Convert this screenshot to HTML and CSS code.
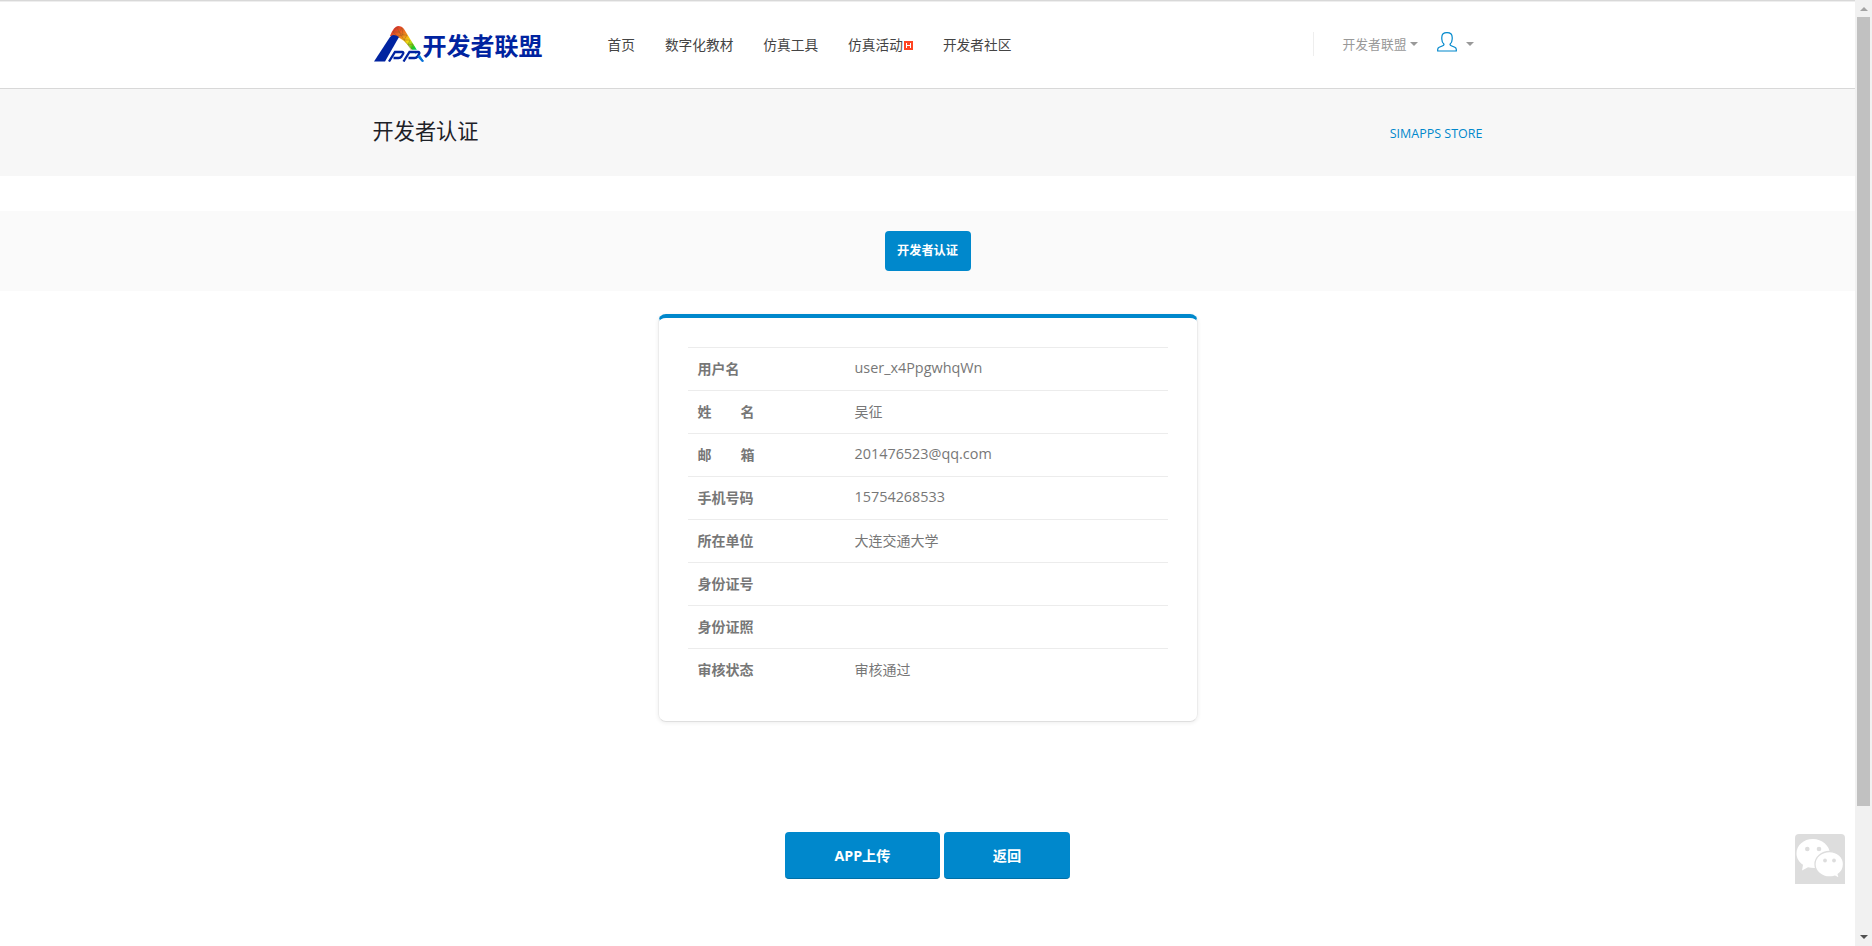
FILE: index.html
```html
<!DOCTYPE html>
<html lang="zh-CN">

<head>
  <meta charset="utf-8">
  <title>开发者认证</title>
  <link rel="stylesheet" href="styles.css">
</head>

<body>

  <div class="page">
    <!-- Header -->
    <header class="header">
      <div class="container header-row">
        <a class="logo">
          <svg width="52" height="38" viewBox="0 0 52 38">
            <defs>
              <linearGradient id="rainbow" x1="20" y1="2" x2="48" y2="37" gradientUnits="userSpaceOnUse">
                <stop offset="0" stop-color="#d8202c"/>
                <stop offset=".28" stop-color="#ee7a20"/>
                <stop offset=".48" stop-color="#f2dc10"/>
                <stop offset=".66" stop-color="#18d020"/>
                <stop offset=".82" stop-color="#08b8d8"/>
                <stop offset="1" stop-color="#0870d8"/>
              </linearGradient>
            </defs>
            <path d="M17 12 Q21 2 25 2 Q29 2 31 5 L51 37.500 H49 L34 20 Q26 11 17 12Z" fill="url(#rainbow)"/>
            <path d="M20 8l4-5 2 5 3-4 1 7 4 0-3 5 6 0-2 5 5-1-2 6M20 8l6 0 4 3-6 1zM26 8l5 8 4 5 4 6" fill="none" stroke="#8a5a20" stroke-width=".6" opacity=".65"/>
            <path d="M1 37.500 L17 13 Q20 9 26 13 L12 37.500Z" fill="#0023a0"/>
            <path d="M15 37.500l6-10h7q2 0 1 2l-1.500 2.500q-1 1.500-3 1.500h-5.500M30 37.500l6-10h8.500q2 0 1 2l-1.500 2.500q-1 1.500-3 1.500h-6" fill="none" stroke="#fff" stroke-width="3.500"/>
            <path d="M16 37.500l6-9.500h7q2 0 1 2l-1.500 2.500q-1 1.500-3 1.500h-5M30.500 37.500l6-9.500h8.500q2 0 1 2l-1.500 2.500q-1 1.500-3 1.500h-6" fill="none" stroke="#0023a0" stroke-width="2.300"/>
            <path d="M45 32l5 5.500" stroke="#0870d8" stroke-width="2"/>
          </svg>
          <span>开发者联盟</span>
        </a>
        <nav class="nav">
          <a>首页</a>
          <a>数字化教材</a>
          <a>仿真工具</a>
          <a>仿真活动<svg class="hot" width="9" height="9" viewBox="0 0 9 9"><path d="M0 0h9v9H0z" fill="#ff4422"/><path d="M2.500 2v5M6.500 2v5M2.500 4.500h4" stroke="#fff"/></svg></a>
          <a>开发者社区</a>
        </nav>
        <div class="account">
          <span class="union">开发者联盟<i class="caret"></i></span>
          <svg class="user" width="20" height="20" viewBox="0 0 20 20">
            <path d="M.7 19v-1.500q0-1.500 1.500-2.200l3.600-1.500q1.200-.5 1.200-1.500Q4.800 10.500 4.800 7V5.500Q4.800.7 10 .7t5.200 4.800V7q0 3.500-2.200 5.300 0 1 1.200 1.500l3.600 1.500q1.500.7 1.500 2.200V19z" fill="none" stroke="#0088cc" stroke-width="1.200"/>
          </svg>
          <i class="caret"></i>
        </div>
      </div>
    </header>

    <!-- Page title -->
    <section class="page-header">
      <div class="container title-row">
        <h1>开发者认证</h1>
        <a>SIMAPPS STORE</a>
      </div>
    </section>

    <section class="tab-bar">
      <a class="tab">开发者认证</a>
    </section>

    <!-- Developer info -->
    <div class="card">
      <table class="info">
        <tr><th>用户名</th><td class="latin">user_x4PpgwhqWn</td></tr>
        <tr><th><span class="spread"><span>姓</span><span>名</span></span></th><td>吴征</td></tr>
        <tr><th><span class="spread"><span>邮</span><span>箱</span></span></th><td class="latin">201476523@qq.com</td></tr>
        <tr><th>手机号码</th><td class="latin">15754268533</td></tr>
        <tr><th>所在单位</th><td>大连交通大学</td></tr>
        <tr><th>身份证号</th><td></td></tr>
        <tr><th>身份证照</th><td></td></tr>
        <tr><th>审核状态</th><td>审核通过</td></tr>
      </table>
    </div>

    <div class="actions">
      <a class="btn btn-upload">APP上传</a>
      <a class="btn btn-back">返回</a>
    </div>
  </div>

  <!-- Scrollbar -->
  <div class="scrollbar">
    <i class="arrow-up"></i>
    <div class="thumb"></div>
    <i class="arrow-down"></i>
  </div>

  <!-- WeChat button -->
  <a class="wechat">
    <svg width="50" height="50" viewBox="0 0 50 50">
      <path d="M18 5C8.500 5 1.500 11.300 1.500 19.500c0 4.700 2.500 8.500 6.500 11.200L7 36.500l6-3.300q2.500.8 6.500.8 14-.5 15.500-14.500C34.500 11.500 27 5 18 5z" fill="#fff"/>
      <path d="M34.500 17.500c-8 0-14.500 5.700-14.500 12.700S26.500 43 34.500 43q3 0 5.500-.9l4.500 2.400-1.300-4.200c3.300-2.400 5.300-6 5.300-10.100 0-7-6-12.700-14-12.700z" fill="#fff" stroke="#ddd" stroke-width="1.300"/>
      <g fill="#ddd"><circle cx="12.300" cy="15" r="2.300"/><circle cx="24" cy="15" r="2.300"/><circle cx="30" cy="26.500" r="1.900"/><circle cx="39" cy="26.500" r="1.900"/></g>
    </svg>
  </a>

</body>

</html>
```
FILE: styles.css
```css
body {
  margin: 0;
  display: flex;
  height: 946px;
  overflow: hidden;
  background: #fff;
  color: #777;
  font-family: "Open Sans", "Noto Sans CJK SC", sans-serif;
  font-size: 14px;
}

.page {
  flex: 1;
}

.container {
  width: 1110px;
  margin: 0 auto;
  display: flex;
}

/* Header */
.header {
  box-sizing: border-box;
  height: 89px;
  border-top: 1px solid #d8d8d8;
  border-bottom: 1px solid #d8d8d8;
  box-shadow: inset 0 1px 0 #eee;
}

.header-row {
  height: 87px;
  align-items: flex-start;
}

.logo {
  display: flex;
  width: 234px;
  padding-top: 23px;
  color: #0023a0;
  font-size: 24px;
  line-height: 43px;
  font-weight: 700;
  white-space: nowrap;
}

.logo svg {
  flex: none;
  margin-right: -2px;
}

.nav {
  display: flex;
  gap: 30px;
  font-size: 13.7px;
  line-height: 20px;
  padding-top: 34px;
  padding-left: 1px;
  color: #444;
}

.hot {
  margin-left: 1px;
  vertical-align: 0;
}

.account {
  display: flex;
  align-items: center;
  margin: 31px 9px 0 auto;
  height: 24px;
  color: #999;
}

.union {
  border-left: 1px solid #eee;
  padding-left: 29px;
  font-size: 12.8px;
  line-height: 24px;
}

.union .caret {
  margin-left: 3px;
}

.user {
  margin: -5px 9px 0 19px;
}

.caret {
  display: inline-block;
  border: 4px solid transparent;
  border-top-color: #999;
  border-bottom: 0;
  vertical-align: 3px;
}

/* Page title */
.page-header {
  height: 87px;
  background: #f7f7f7;
}

.title-row {
  justify-content: space-between;
}

.title-row h1 {
  margin: 27px 0 0;
  font-size: 21.2px;
  font-weight: 400;
  line-height: 30px;
  color: #1d2127;
}

.title-row a {
  margin-top: 35px;
  font-size: 12.5px;
  line-height: 20px;
  color: #0088cc;
}

.tab-bar {
  display: flex;
  justify-content: center;
  align-items: center;
  height: 80px;
  margin-top: 35px;
  background: #fafafa;
}

.tab {
  width: 86px;
  border-radius: 4px;
  background: #0088cc;
  color: #fff;
  font-size: 12.2px;
  font-weight: 700;
  line-height: 40px;
  text-align: center;
}

/* Info card */
.card {
  box-sizing: border-box;
  width: 540px;
  height: 408px;
  margin: 23px auto 0;
  padding: 29px 29px 0;
  border: 1px solid #ececec;
  border-top: 4px solid #0088cc;
  border-bottom-color: #dfdfdf;
  border-radius: 8px;
  box-shadow: 0 1px 4px rgba(0, 0, 0, 0.07);
}

.info {
  width: 480px;
  border-collapse: collapse;
}

.info th,
.info td {
  height: 42px;
  padding: 0 0 1px 10px;
  box-sizing: border-box;
  height: 43px;
  border-top: 1px solid #ececec;
  text-align: left;
  line-height: 20px;
}

.info th {
  width: 157px;
  font-weight: 700;
}

.info .latin {
  padding-bottom: 2px;
  font-size: 14.4px;
}

.spread {
  display: flex;
  width: 57px;
  justify-content: space-between;
}

/* Buttons */
.actions {
  display: flex;
  justify-content: center;
  gap: 4px;
  margin-top: 110px;
}

.btn {
  box-sizing: border-box;
  height: 47px;
  border-radius: 4px;
  border-bottom: 1px solid #006fa6;
  background: #0088cc;
  color: #fff;
  font-size: 14.2px;
  font-weight: 700;
  line-height: 47px;
  text-align: center;
}

.btn-upload {
  width: 155px;
}

.btn-back {
  width: 126px;
}

/* Scrollbar */
.scrollbar {
  display: flex;
  flex-direction: column;
  align-items: center;
  width: 17px;
  background: #f1f1f1;
}

.arrow-up {
  margin-top: 7px;
  border: 4px solid transparent;
  border-top: 0;
  border-bottom-color: #a3a3a3;
}

.thumb {
  width: 13px;
  height: 789px;
  margin-top: 6px;
  background: #c1c1c1;
}

.arrow-down {
  margin: auto 0 7px;
  border: 4px solid transparent;
  border-bottom: 0;
  border-top-color: #505050;
}

.wechat {
  position: absolute;
  right: 27px;
  bottom: 62px;
  height: 50px;
  background: #ddd;
  border-radius: 4px 4px 0 0;
}
```
